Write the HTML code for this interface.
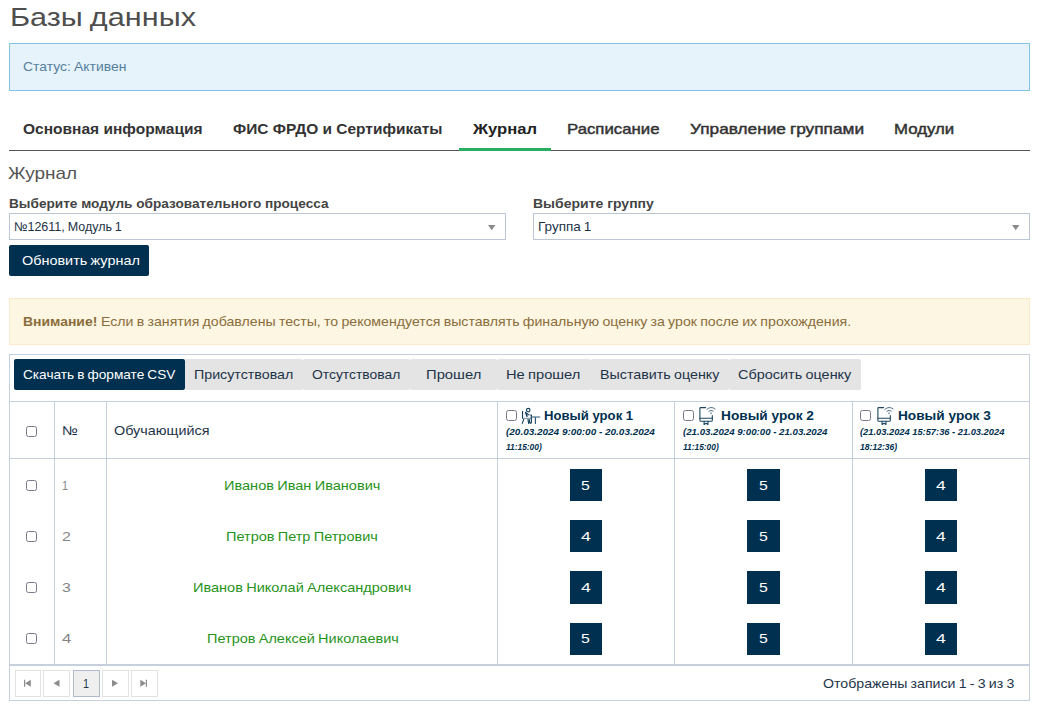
<!DOCTYPE html>
<html lang="ru"><head><meta charset="utf-8"><title>Базы данных</title>
<style>
html,body{margin:0;padding:0;background:#fff;}
body{width:1044px;height:713px;position:relative;overflow:hidden;font-family:"Liberation Sans",sans-serif;}
#b div{position:absolute;}
#t span{position:absolute;white-space:nowrap;line-height:1;transform-origin:0 0;word-spacing:-0.05em;}
svg{position:absolute;overflow:visible;}
</style></head><body>
<div id="b">
<div style="left:9px;top:43px;width:1021px;height:48px;box-sizing:border-box;background:#e6f3fb;border:1px solid #82c3e3;"></div>
<div style="left:9px;top:150px;width:1021px;height:1px;background:#555;"></div>
<div style="left:459px;top:148px;width:92px;height:3px;background:#27ae60;"></div>
<div style="left:9px;top:213px;width:497px;height:27px;box-sizing:border-box;background:#fff;border:1px solid #bac6d3;"></div>
<div style="left:533px;top:213px;width:497px;height:27px;box-sizing:border-box;background:#fff;border:1px solid #bac6d3;"></div>
<div style="left:9px;top:245px;width:140px;height:31px;background:#00304f;border-radius:2px;"></div>
<div style="left:9px;top:298px;width:1021px;height:47px;box-sizing:border-box;background:#fdf6e2;border:1px solid #fbe9c9;"></div>
<div style="left:9px;top:354px;width:1021px;height:347px;box-sizing:border-box;border:1px solid #c5d0dc;background:#fff;"></div>
<div style="left:14px;top:359px;width:171px;height:31px;background:#00304f;border-radius:2px;"></div>
<div style="left:185px;top:359px;width:118px;height:31px;background:#e4e4e4;border-radius:2px;"></div>
<div style="left:303px;top:359px;width:107px;height:31px;background:#e4e4e4;border-radius:2px;"></div>
<div style="left:410px;top:359px;width:87px;height:31px;background:#e4e4e4;border-radius:2px;"></div>
<div style="left:497px;top:359px;width:94px;height:31px;background:#e4e4e4;border-radius:2px;"></div>
<div style="left:591px;top:359px;width:138px;height:31px;background:#e4e4e4;border-radius:2px;"></div>
<div style="left:729px;top:359px;width:132px;height:31px;background:#e4e4e4;border-radius:2px;"></div>
<div style="left:9px;top:401px;width:1021px;height:1px;background:#c5d0dc;"></div>
<div style="left:9px;top:458px;width:1021px;height:1px;background:#c5d0dc;"></div>
<div style="left:54px;top:401px;width:1px;height:263px;background:#c5d0dc;"></div>
<div style="left:106px;top:401px;width:1px;height:263px;background:#c5d0dc;"></div>
<div style="left:497px;top:401px;width:1px;height:263px;background:#c5d0dc;"></div>
<div style="left:674px;top:401px;width:1px;height:263px;background:#c5d0dc;"></div>
<div style="left:852px;top:401px;width:1px;height:263px;background:#c5d0dc;"></div>
<div style="left:9px;top:664px;width:1021px;height:2px;background:#c5d0dc;"></div>
<div style="left:570px;top:469px;width:32px;height:32px;background:#00304f;"></div>
<div style="left:747px;top:469px;width:33px;height:32px;background:#00304f;"></div>
<div style="left:925px;top:469px;width:32px;height:32px;background:#00304f;"></div>
<div style="left:570px;top:520px;width:32px;height:32px;background:#00304f;"></div>
<div style="left:747px;top:520px;width:33px;height:32px;background:#00304f;"></div>
<div style="left:925px;top:520px;width:32px;height:32px;background:#00304f;"></div>
<div style="left:570px;top:571px;width:32px;height:32.5px;background:#00304f;"></div>
<div style="left:747px;top:571px;width:33px;height:32.5px;background:#00304f;"></div>
<div style="left:925px;top:571px;width:32px;height:32.5px;background:#00304f;"></div>
<div style="left:570px;top:622.5px;width:32px;height:32px;background:#00304f;"></div>
<div style="left:747px;top:622.5px;width:33px;height:32px;background:#00304f;"></div>
<div style="left:925px;top:622.5px;width:32px;height:32px;background:#00304f;"></div>
<div style="left:26px;top:426px;width:11px;height:11px;box-sizing:border-box;border:1px solid #7a7a8c;border-radius:2.5px;background:#fff;"></div>
<div style="left:26px;top:480px;width:11px;height:11px;box-sizing:border-box;border:1px solid #7a7a8c;border-radius:2.5px;background:#fff;"></div>
<div style="left:26px;top:531px;width:11px;height:11px;box-sizing:border-box;border:1px solid #7a7a8c;border-radius:2.5px;background:#fff;"></div>
<div style="left:26px;top:582px;width:11px;height:11px;box-sizing:border-box;border:1px solid #7a7a8c;border-radius:2.5px;background:#fff;"></div>
<div style="left:26px;top:633px;width:11px;height:11px;box-sizing:border-box;border:1px solid #7a7a8c;border-radius:2.5px;background:#fff;"></div>
<div style="left:506px;top:410px;width:11px;height:11px;box-sizing:border-box;border:1px solid #7a7a8c;border-radius:2.5px;background:#fff;"></div>
<div style="left:683px;top:410px;width:11px;height:11px;box-sizing:border-box;border:1px solid #7a7a8c;border-radius:2.5px;background:#fff;"></div>
<div style="left:860px;top:410px;width:11px;height:11px;box-sizing:border-box;border:1px solid #7a7a8c;border-radius:2.5px;background:#fff;"></div>
<div style="left:15px;top:670px;width:26px;height:27px;box-sizing:border-box;border:1px solid #e2e2e2;background:#fff;"></div>
<div style="left:43px;top:670px;width:27px;height:27px;box-sizing:border-box;border:1px solid #e2e2e2;background:#fff;"></div>
<div style="left:73px;top:670px;width:27px;height:27px;box-sizing:border-box;border:1px solid #aebbcb;background:#efefef;"></div>
<div style="left:102px;top:670px;width:27px;height:27px;box-sizing:border-box;border:1px solid #e2e2e2;background:#fff;"></div>
<div style="left:131px;top:670px;width:27px;height:27px;box-sizing:border-box;border:1px solid #e2e2e2;background:#fff;"></div>
</div>
<!-- select arrows -->
<svg style="left:488.4px;top:225px" width="7.5" height="5.6" viewBox="0 0 8 6"><path d="M0 0h8L4 5.5z" fill="#8a8a8a"/></svg>
<svg style="left:1012.4px;top:225px" width="7.5" height="5.6" viewBox="0 0 8 6"><path d="M0 0h8L4 5.5z" fill="#8a8a8a"/></svg>
<!-- pager icons -->
<svg style="left:0;top:0" width="200" height="713" viewBox="0 0 200 713"><g fill="#8c8c8c">
<path d="M24 679.7h1.2v7H24zM30.8 679.7v7l-5.6-3.5z"/>
<path d="M59.5 679.7v7l-6-3.5z"/>
<path d="M112 679.7v7l6-3.5z"/>
<path d="M140.3 679.7v7l5.6-3.5zM145.8 679.7h1.2v7h-1.2z"/>
</g></svg>
<!-- lesson icon 1: person at desk -->
<svg style="left:519px;top:405px" width="24" height="22" viewBox="0 0 24 22" fill="none" stroke="#123e5a" stroke-width="1.1" stroke-linecap="round" stroke-linejoin="round">
<circle cx="9.25" cy="5.1" r="1.75"/>
<path d="M3.55 6.4V13.3"/>
<path d="M5 13.6L3.25 18.4"/>
<path d="M4.2 13.4H11.6" stroke="#86a0b1" stroke-width="1.2"/>
<path d="M6.7 7.5L8 11.3" stroke-width="1.5"/>
<path d="M7.6 8.2L9.7 9.7"/>
<path d="M9.7 9.7L12.2 10.3" stroke="#6f8fa3"/>
<path d="M12.35 10.2V17.4Q12.4 18.3 11.3 18.2Q10.4 18 10.2 14.6" stroke-width="1.2"/>
<path d="M9 14.6L9.6 18.4"/>
<path d="M13.4 12H20.7" stroke="#6f8fa3" stroke-width="1.3"/>
<path d="M16.4 12.5V18.4" stroke="#33597a" stroke-width="1.2"/>
</svg>
<!-- lesson icon 2/3: online board -->
<svg style="left:699.4px;top:406px" width="20" height="19" viewBox="0 0 20 19">
<g fill="none" stroke="#1d4560" stroke-width="1.1" stroke-linecap="round" stroke-linejoin="round">
<path d="M6.6 1.6H1.6Q0.9 1.6 0.9 2.3V14.2Q0.9 15.3 2 15.3H12.2Q13.3 15.3 13.3 14.2V9.6"/>
<path d="M0.9 12.2H13.3"/>
<path d="M5.1 15.4V18.5L7.05 17.2L9 18.5V15.4"/>
<path d="M7.9 3.3Q12 -0.3 16.1 2.9" stroke="#3f6079" stroke-width="0.9"/>
<path d="M9.9 5.1Q12 3.6 14.2 5" stroke="#3f6079" stroke-width="0.9"/>
<path d="M12 6.8V7.6" stroke="#3f6079"/>
</g>
</svg>
<svg style="left:877.1px;top:406px" width="20" height="19" viewBox="0 0 20 19">
<g fill="none" stroke="#1d4560" stroke-width="1.1" stroke-linecap="round" stroke-linejoin="round">
<path d="M6.6 1.6H1.6Q0.9 1.6 0.9 2.3V14.2Q0.9 15.3 2 15.3H12.2Q13.3 15.3 13.3 14.2V9.6"/>
<path d="M0.9 12.2H13.3"/>
<path d="M5.1 15.4V18.5L7.05 17.2L9 18.5V15.4"/>
<path d="M7.9 3.3Q12 -0.3 16.1 2.9" stroke="#3f6079" stroke-width="0.9"/>
<path d="M9.9 5.1Q12 3.6 14.2 5" stroke="#3f6079" stroke-width="0.9"/>
<path d="M12 6.8V7.6" stroke="#3f6079"/>
</g>
</svg>
<div id="t">
<span style="left:9.78px;top:4.05px;font-size:26.4px;color:#4e4e4e;transform:scaleX(1.1611);">Базы данных</span>
<span style="left:23.17px;top:61.15px;font-size:12.7px;color:#557f9e;transform:scaleX(1.0964);">Статус: Активен</span>
<span style="left:23.05px;top:121.64px;font-size:14.6px;font-weight:700;word-spacing:0;color:#333;transform:scaleX(1.0632);">Основная информация</span>
<span style="left:233.05px;top:121.64px;font-size:14.6px;font-weight:700;word-spacing:0;color:#333;transform:scaleX(1.0587);">ФИС ФРДО и Сертификаты</span>
<span style="left:472.65px;top:121.64px;font-size:14.6px;font-weight:700;word-spacing:0;color:#222;transform:scaleX(1.1369);">Журнал</span>
<span style="left:567.05px;top:121.64px;font-size:14.6px;color:#333;-webkit-text-stroke:0.45px #333;transform:scaleX(1.1499);">Расписание</span>
<span style="left:689.55px;top:121.64px;font-size:14.6px;color:#333;-webkit-text-stroke:0.45px #333;transform:scaleX(1.1828);">Управление группами</span>
<span style="left:894.05px;top:121.64px;font-size:14.6px;color:#333;-webkit-text-stroke:0.45px #333;transform:scaleX(1.1521);">Модули</span>
<span style="left:8.45px;top:165.29px;font-size:16.2px;color:#555;transform:scaleX(1.1713);">Журнал</span>
<span style="left:8.67px;top:198.15px;font-size:12.7px;font-weight:700;word-spacing:0;color:#444;transform:scaleX(1.0737);">Выберите модуль образовательного процесса</span>
<span style="left:532.67px;top:198.15px;font-size:12.7px;font-weight:700;word-spacing:0;color:#444;transform:scaleX(1.1030);">Выберите группу</span>
<span style="left:14.17px;top:221.15px;font-size:12.7px;color:#1d3348;transform:scaleX(0.9868);">№12611, Модуль 1</span>
<span style="left:538.17px;top:221.15px;font-size:12.7px;color:#1d3348;transform:scaleX(1.0630);">Группа 1</span>
<span style="left:21.67px;top:255.15px;font-size:12.7px;color:#fff;transform:scaleX(1.1363);">Обновить журнал</span>
<span style="left:23.17px;top:316.15px;font-size:12.7px;font-weight:700;word-spacing:0;color:#8a6d3b;transform:scaleX(1.0987);">Внимание!</span>
<span style="left:101.37px;top:316.15px;font-size:12.7px;color:#8a6d3b;transform:scaleX(1.1154);">Если в занятия добавлены тесты, то рекомендуется выставлять финальную оценку за урок после их прохождения.</span>
<span style="left:23.17px;top:369.15px;font-size:12.7px;color:#fff;transform:scaleX(1.0738);">Скачать в формате CSV</span>
<span style="left:194.17px;top:369.15px;font-size:12.7px;color:#1d3348;transform:scaleX(1.1226);">Присутствовал</span>
<span style="left:312.17px;top:369.15px;font-size:12.7px;color:#1d3348;transform:scaleX(1.0937);">Отсутствовал</span>
<span style="left:426.17px;top:369.15px;font-size:12.7px;color:#1d3348;transform:scaleX(1.1661);">Прошел</span>
<span style="left:506.17px;top:369.15px;font-size:12.7px;color:#1d3348;transform:scaleX(1.1558);">Не прошел</span>
<span style="left:600.17px;top:369.15px;font-size:12.7px;color:#1d3348;transform:scaleX(1.1250);">Выставить оценку</span>
<span style="left:738.17px;top:369.15px;font-size:12.7px;color:#1d3348;transform:scaleX(1.1381);">Сбросить оценку</span>
<span style="left:62.17px;top:425.15px;font-size:12.7px;color:#1d3348;transform:scaleX(1.1621);">№</span>
<span style="left:113.67px;top:425.15px;font-size:12.7px;color:#1d3348;transform:scaleX(1.1332);">Обучающийся</span>
<span style="left:544.16px;top:409.98px;font-size:12.9px;font-weight:700;word-spacing:0;color:#00304f;transform:scaleX(1.0180);">Новый урок 1</span>
<span style="left:721.16px;top:409.98px;font-size:12.9px;font-weight:700;word-spacing:0;color:#00304f;transform:scaleX(1.0614);">Новый урок 2</span>
<span style="left:898.46px;top:409.98px;font-size:12.9px;font-weight:700;word-spacing:0;color:#00304f;transform:scaleX(1.0602);">Новый урок 3</span>
<span style="left:506.33px;top:427.55px;font-size:8.8px;font-weight:700;word-spacing:0;color:#00304f;font-style:italic;transform:scaleX(1.1311);">(20.03.2024 9:00:00 - 20.03.2024</span>
<span style="left:506.33px;top:442.55px;font-size:8.8px;font-weight:700;word-spacing:0;color:#00304f;font-style:italic;transform:scaleX(0.9526);">11:15:00)</span>
<span style="left:683.43px;top:427.55px;font-size:8.8px;font-weight:700;word-spacing:0;color:#00304f;font-style:italic;transform:scaleX(1.0976);">(21.03.2024 9:00:00 - 21.03.2024</span>
<span style="left:683.43px;top:442.55px;font-size:8.8px;font-weight:700;word-spacing:0;color:#00304f;font-style:italic;transform:scaleX(0.9526);">11:15:00)</span>
<span style="left:860.43px;top:427.55px;font-size:8.8px;font-weight:700;word-spacing:0;color:#00304f;font-style:italic;transform:scaleX(1.0576);">(21.03.2024 15:57:36 - 21.03.2024</span>
<span style="left:860.43px;top:442.55px;font-size:8.8px;font-weight:700;word-spacing:0;color:#00304f;font-style:italic;transform:scaleX(0.9756);">18:12:36)</span>
<span style="left:61.59px;top:480.15px;font-size:12.7px;color:#858585;transform:scaleX(0.8500);">1</span>
<span style="left:224.17px;top:480.15px;font-size:12.7px;color:#27931b;transform:scaleX(1.1460);">Иванов Иван Иванович</span>
<span style="left:581.42px;top:480.15px;font-size:12.7px;color:#fff;transform:scaleX(1.2508);">5</span>
<span style="left:758.92px;top:480.15px;font-size:12.7px;color:#fff;transform:scaleX(1.2508);">5</span>
<span style="left:935.92px;top:480.15px;font-size:12.7px;color:#fff;transform:scaleX(1.3924);">4</span>
<span style="left:61.67px;top:531.15px;font-size:12.7px;color:#858585;transform:scaleX(1.2508);">2</span>
<span style="left:226.17px;top:531.15px;font-size:12.7px;color:#27931b;transform:scaleX(1.1421);">Петров Петр Петрович</span>
<span style="left:580.92px;top:531.15px;font-size:12.7px;color:#fff;transform:scaleX(1.3924);">4</span>
<span style="left:758.92px;top:531.15px;font-size:12.7px;color:#fff;transform:scaleX(1.2508);">5</span>
<span style="left:935.92px;top:531.15px;font-size:12.7px;color:#fff;transform:scaleX(1.3924);">4</span>
<span style="left:61.67px;top:582.15px;font-size:12.7px;color:#858585;transform:scaleX(1.2508);">3</span>
<span style="left:193.17px;top:582.15px;font-size:12.7px;color:#27931b;transform:scaleX(1.1454);">Иванов Николай Александрович</span>
<span style="left:580.92px;top:582.15px;font-size:12.7px;color:#fff;transform:scaleX(1.3924);">4</span>
<span style="left:758.92px;top:582.15px;font-size:12.7px;color:#fff;transform:scaleX(1.2508);">5</span>
<span style="left:935.92px;top:582.15px;font-size:12.7px;color:#fff;transform:scaleX(1.3924);">4</span>
<span style="left:61.67px;top:633.15px;font-size:12.7px;color:#858585;transform:scaleX(1.3216);">4</span>
<span style="left:206.67px;top:633.15px;font-size:12.7px;color:#27931b;transform:scaleX(1.1420);">Петров Алексей Николаевич</span>
<span style="left:581.42px;top:633.15px;font-size:12.7px;color:#fff;transform:scaleX(1.2508);">5</span>
<span style="left:758.92px;top:633.15px;font-size:12.7px;color:#fff;transform:scaleX(1.2508);">5</span>
<span style="left:935.92px;top:633.15px;font-size:12.7px;color:#fff;transform:scaleX(1.3924);">4</span>
<span style="left:83.34px;top:678.15px;font-size:12.7px;color:#1d3348;transform:scaleX(0.8500);">1</span>
<span style="left:822.67px;top:678.15px;font-size:12.7px;color:#1d3348;transform:scaleX(1.1153);">Отображены записи 1 - 3 из 3</span>
</div>
</body></html>
